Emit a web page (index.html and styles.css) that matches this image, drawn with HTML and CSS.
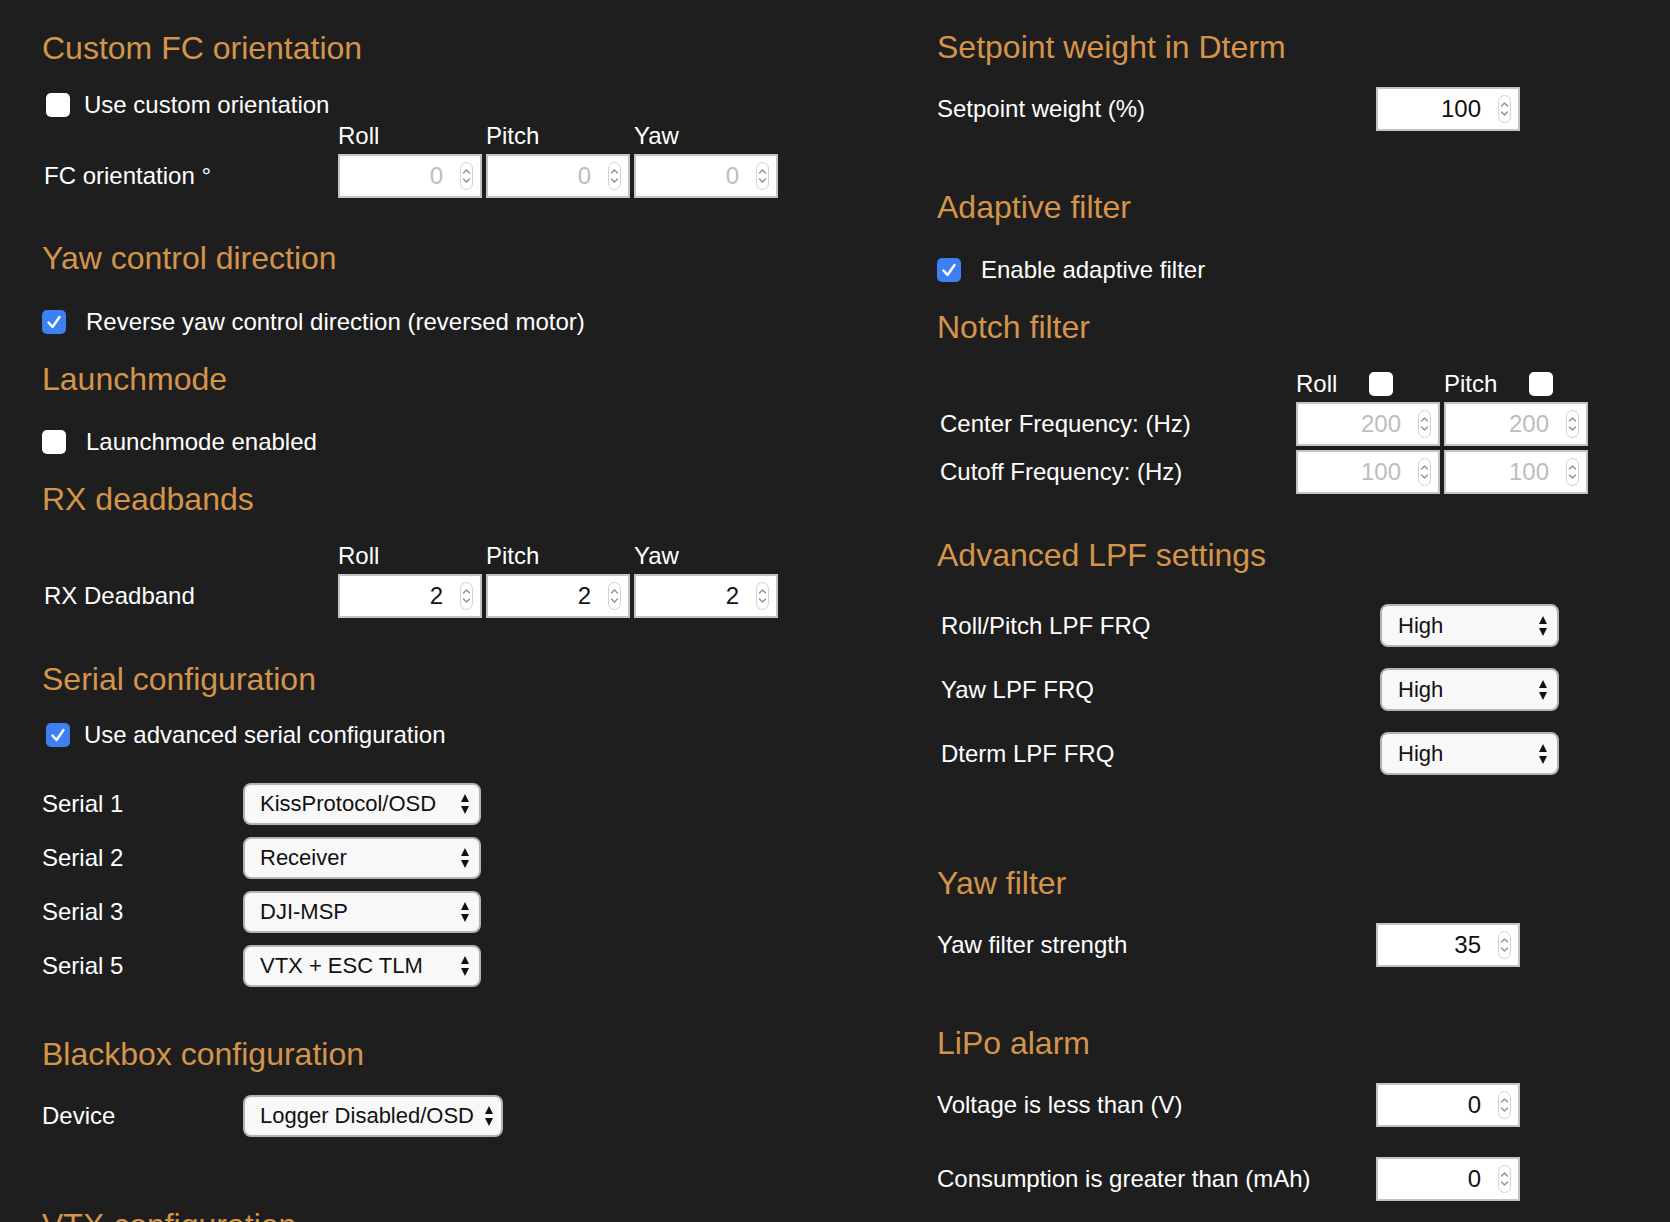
FILE: index.html
```html
<!DOCTYPE html>
<html>
<head>
<meta charset="utf-8">
<link rel="stylesheet" href="styles.css">
</head>
<body>
<div class="page">
  <div class="col col-left">
    <h2 class="title t-first">Custom FC orientation</h2>
    <div class="cbrow in4 gap14 mt25"><span class="cb"></span><span>Use custom orientation</span></div>
    <div class="axes mt3"><span></span><span>Roll</span><span>Pitch</span><span>Yaw</span></div>
    <div class="axes-row mt4">
      <span class="lbl">FC orientation °</span>
      <div class="num dis"><span>0</span><svg class="spin" viewBox="0 0 13 28"><rect x="0.5" y="0.5" width="12" height="27" rx="6"/><polyline points="3.5,11 6.5,8 9.5,11"/><polyline points="3.5,17 6.5,20 9.5,17"/></svg></div>
      <div class="num dis"><span>0</span><svg class="spin" viewBox="0 0 13 28"><rect x="0.5" y="0.5" width="12" height="27" rx="6"/><polyline points="3.5,11 6.5,8 9.5,11"/><polyline points="3.5,17 6.5,20 9.5,17"/></svg></div>
      <div class="num dis"><span>0</span><svg class="spin" viewBox="0 0 13 28"><rect x="0.5" y="0.5" width="12" height="27" rx="6"/><polyline points="3.5,11 6.5,8 9.5,11"/><polyline points="3.5,17 6.5,20 9.5,17"/></svg></div>
    </div>

    <h2 class="title mt42">Yaw control direction</h2>
    <div class="cbrow gap20 mt32"><span class="cb on"><svg viewBox="0 0 24 24"><polyline points="6.5,12.5 10.5,17 17.5,7"/></svg></span><span>Reverse yaw control direction (reversed motor)</span></div>

    <h2 class="title mt25">Launchmode</h2>
    <div class="cbrow gap20 mt31"><span class="cb"></span><span>Launchmode enabled</span></div>

    <h2 class="title mt25">RX deadbands</h2>
    <div class="axes mt25"><span></span><span>Roll</span><span>Pitch</span><span>Yaw</span></div>
    <div class="axes-row mt4">
      <span class="lbl">RX Deadband</span>
      <div class="num"><span>2</span><svg class="spin" viewBox="0 0 13 28"><rect x="0.5" y="0.5" width="12" height="27" rx="6"/><polyline points="3.5,11 6.5,8 9.5,11"/><polyline points="3.5,17 6.5,20 9.5,17"/></svg></div>
      <div class="num"><span>2</span><svg class="spin" viewBox="0 0 13 28"><rect x="0.5" y="0.5" width="12" height="27" rx="6"/><polyline points="3.5,11 6.5,8 9.5,11"/><polyline points="3.5,17 6.5,20 9.5,17"/></svg></div>
      <div class="num"><span>2</span><svg class="spin" viewBox="0 0 13 28"><rect x="0.5" y="0.5" width="12" height="27" rx="6"/><polyline points="3.5,11 6.5,8 9.5,11"/><polyline points="3.5,17 6.5,20 9.5,17"/></svg></div>
    </div>

    <h2 class="title mt43">Serial configuration</h2>
    <div class="cbrow in4 gap14 mt24"><span class="cb on"><svg viewBox="0 0 24 24"><polyline points="6.5,12.5 10.5,17 17.5,7"/></svg></span><span>Use advanced serial configuration</span></div>

    <div class="serials mt34">
      <div class="srow"><span class="lbl">Serial 1</span><div class="sel w238"><span>KissProtocol/OSD</span><svg class="arr" viewBox="0 0 10 22"><polygon points="1,9 9,9 5,1"/><polygon points="1,13 9,13 5,21"/></svg></div></div>
      <div class="srow"><span class="lbl">Serial 2</span><div class="sel w238"><span>Receiver</span><svg class="arr" viewBox="0 0 10 22"><polygon points="1,9 9,9 5,1"/><polygon points="1,13 9,13 5,21"/></svg></div></div>
      <div class="srow"><span class="lbl">Serial 3</span><div class="sel w238"><span>DJI-MSP</span><svg class="arr" viewBox="0 0 10 22"><polygon points="1,9 9,9 5,1"/><polygon points="1,13 9,13 5,21"/></svg></div></div>
      <div class="srow"><span class="lbl">Serial 5</span><div class="sel w238"><span>VTX + ESC TLM</span><svg class="arr" viewBox="0 0 10 22"><polygon points="1,9 9,9 5,1"/><polygon points="1,13 9,13 5,21"/></svg></div></div>
    </div>

    <h2 class="title mt49">Blackbox configuration</h2>
    <div class="srow mt23"><span class="lbl">Device</span><div class="sel w260 tight"><span>Logger Disabled/OSD</span><svg class="arr" viewBox="0 0 10 22"><polygon points="1,9 9,9 5,1"/><polygon points="1,13 9,13 5,21"/></svg></div></div>

    <h2 class="title mt70">VTX configuration</h2>
  </div>

  <div class="col col-right">
    <h2 class="title t-first-r">Setpoint weight in Dterm</h2>
    <div class="frow mt22"><span class="lbl">Setpoint weight (%)</span>
      <div class="num"><span>100</span><svg class="spin" viewBox="0 0 13 28"><rect x="0.5" y="0.5" width="12" height="27" rx="6"/><polyline points="3.5,11 6.5,8 9.5,11"/><polyline points="3.5,17 6.5,20 9.5,17"/></svg></div>
    </div>

    <h2 class="title mt58">Adaptive filter</h2>
    <div class="cbrow gap20 mt31"><span class="cb on"><svg viewBox="0 0 24 24"><polyline points="6.5,12.5 10.5,17 17.5,7"/></svg></span><span>Enable adaptive filter</span></div>

    <h2 class="title mt25">Notch filter</h2>
    <div class="notch-head mt25"><span></span>
      <div class="nh"><span>Roll</span><span class="cb"></span></div>
      <div class="nh"><span>Pitch</span><span class="cb"></span></div>
    </div>
    <div class="notch-row mt4"><span class="lbl">Center Frequency: (Hz)</span>
      <div class="num dis"><span>200</span><svg class="spin" viewBox="0 0 13 28"><rect x="0.5" y="0.5" width="12" height="27" rx="6"/><polyline points="3.5,11 6.5,8 9.5,11"/><polyline points="3.5,17 6.5,20 9.5,17"/></svg></div>
      <div class="num dis"><span>200</span><svg class="spin" viewBox="0 0 13 28"><rect x="0.5" y="0.5" width="12" height="27" rx="6"/><polyline points="3.5,11 6.5,8 9.5,11"/><polyline points="3.5,17 6.5,20 9.5,17"/></svg></div>
    </div>
    <div class="notch-row mt4"><span class="lbl">Cutoff Frequency: (Hz)</span>
      <div class="num dis"><span>100</span><svg class="spin" viewBox="0 0 13 28"><rect x="0.5" y="0.5" width="12" height="27" rx="6"/><polyline points="3.5,11 6.5,8 9.5,11"/><polyline points="3.5,17 6.5,20 9.5,17"/></svg></div>
      <div class="num dis"><span>100</span><svg class="spin" viewBox="0 0 13 28"><rect x="0.5" y="0.5" width="12" height="27" rx="6"/><polyline points="3.5,11 6.5,8 9.5,11"/><polyline points="3.5,17 6.5,20 9.5,17"/></svg></div>
    </div>

    <h2 class="title mt43">Advanced LPF settings</h2>
    <div class="lpf mt31">
      <div class="lrow"><span class="lbl">Roll/Pitch LPF FRQ</span><div class="sel w179"><span>High</span><svg class="arr" viewBox="0 0 10 22"><polygon points="1,9 9,9 5,1"/><polygon points="1,13 9,13 5,21"/></svg></div></div>
      <div class="lrow"><span class="lbl">Yaw LPF FRQ</span><div class="sel w179"><span>High</span><svg class="arr" viewBox="0 0 10 22"><polygon points="1,9 9,9 5,1"/><polygon points="1,13 9,13 5,21"/></svg></div></div>
      <div class="lrow"><span class="lbl">Dterm LPF FRQ</span><div class="sel w179"><span>High</span><svg class="arr" viewBox="0 0 10 22"><polygon points="1,9 9,9 5,1"/><polygon points="1,13 9,13 5,21"/></svg></div></div>
    </div>

    <h2 class="title mt90">Yaw filter</h2>
    <div class="frow mt22"><span class="lbl">Yaw filter strength</span>
      <div class="num"><span>35</span><svg class="spin" viewBox="0 0 13 28"><rect x="0.5" y="0.5" width="12" height="27" rx="6"/><polyline points="3.5,11 6.5,8 9.5,11"/><polyline points="3.5,17 6.5,20 9.5,17"/></svg></div>
    </div>

    <h2 class="title mt58">LiPo alarm</h2>
    <div class="frow mt22"><span class="lbl">Voltage is less than (V)</span>
      <div class="num"><span>0</span><svg class="spin" viewBox="0 0 13 28"><rect x="0.5" y="0.5" width="12" height="27" rx="6"/><polyline points="3.5,11 6.5,8 9.5,11"/><polyline points="3.5,17 6.5,20 9.5,17"/></svg></div>
    </div>
    <div class="frow mt30"><span class="lbl">Consumption is greater than (mAh)</span>
      <div class="num"><span>0</span><svg class="spin" viewBox="0 0 13 28"><rect x="0.5" y="0.5" width="12" height="27" rx="6"/><polyline points="3.5,11 6.5,8 9.5,11"/><polyline points="3.5,17 6.5,20 9.5,17"/></svg></div>
    </div>
  </div>
</div>
</body>
</html>
```

FILE: styles.css
```css
* { box-sizing: border-box; }
html, body { margin: 0; padding: 0; }
body {
  background: #1e1e1e;
  color: #ffffff;
  font-family: "Liberation Sans", Arial, Helvetica, sans-serif;
  font-size: 24px;
  line-height: 28px;
  width: 1670px;
  height: 1222px;
  overflow: hidden;
}
.page { display: flex; align-items: flex-start; }
.col { display: flex; flex-direction: column; align-items: flex-start; }
.col-left { width: 937px; padding-left: 42px; }
.col-right { flex: 1; }

.title {
  margin: 0;
  font-size: 32px;
  line-height: 36px;
  font-weight: normal;
  color: #d4944a;
  white-space: nowrap;
}
.t-first { margin-top: 30px; }
.t-first-r { margin-top: 29px; }

.mt3 { margin-top: 3px; }
.mt4 { margin-top: 4px; }
.mt22 { margin-top: 22px; }
.mt23 { margin-top: 23px; }
.mt24 { margin-top: 24px; }
.mt25 { margin-top: 25px; }
.mt30 { margin-top: 30px; }
.mt31 { margin-top: 31px; }
.mt32 { margin-top: 32px; }
.mt34 { margin-top: 34px; }
.mt42 { margin-top: 42px; }
.mt43 { margin-top: 43px; }
.mt49 { margin-top: 49px; }
.mt58 { margin-top: 58px; }
.mt70 { margin-top: 70px; }
.mt90 { margin-top: 90px; }

/* checkbox rows */
.cbrow { display: flex; align-items: center; height: 28px; white-space: nowrap; }
.in4 { margin-left: 4px; }
.gap14 { gap: 14px; }
.gap20 { gap: 20px; }

.cb {
  width: 24px;
  height: 24px;
  border-radius: 5px;
  background: #ffffff;
  flex: none;
  display: inline-flex;
}
.cb.on { background: #3d80f3; }
.cb svg { width: 24px; height: 24px; }
.cb svg polyline { fill: none; stroke: #ffffff; stroke-width: 2.4; stroke-linecap: round; stroke-linejoin: round; }

/* axis tables */
.axes, .axes-row {
  display: grid;
  grid-template-columns: 290px 144px 144px 144px;
  column-gap: 4px;
  margin-left: 2px;
}
.axes { height: 28px; }
.axes-row { align-items: center; }
.lbl { white-space: nowrap; }

/* number inputs */
.num {
  width: 144px;
  height: 44px;
  background: #ffffff;
  border: 2px solid #c3c3c3;
  display: flex;
  align-items: center;
  justify-content: flex-end;
  gap: 17px;
  padding-right: 7px;
  color: #111111;
}
.num.dis { color: #bdbdbd; }
.spin { width: 13px; height: 28px; flex: none; }
.spin rect { fill: #ffffff; stroke: #d2d2d2; stroke-width: 1; }
.spin polyline { fill: none; stroke: #8a8a8a; stroke-width: 1.2; stroke-linecap: round; stroke-linejoin: round; }

/* selects */
.serials { display: flex; flex-direction: column; gap: 12px; }
.srow {
  display: grid;
  grid-template-columns: 201px auto;
  align-items: center;
}
.sel {
  height: 42px;
  background: #f8f8f8;
  border: 2px solid #b3b3b3;
  border-radius: 8px;
  color: #111111;
  font-size: 22px;
  display: flex;
  align-items: center;
  justify-content: space-between;
  padding: 0 9px 0 15px;
  white-space: nowrap;
}
.sel.tight { padding-right: 7px; }
.w238 { width: 238px; }
.w260 { width: 260px; }
.w179 { width: 179px; height: 43px; padding-left: 16px; }
.arr { width: 10px; height: 22px; flex: none; }
.arr polygon { fill: #111111; }

/* right column rows */
.frow {
  display: grid;
  grid-template-columns: 439px 144px;
  align-items: center;
}

.notch-head, .notch-row {
  display: grid;
  grid-template-columns: 352px 144px 144px;
  column-gap: 4px;
  margin-left: 3px;
  align-items: center;
}
.notch-head { height: 28px; }
.nh { display: flex; align-items: center; gap: 32px; }

.lpf { display: flex; flex-direction: column; gap: 21px; margin-left: 4px; }
.lrow {
  display: grid;
  grid-template-columns: 439px 179px;
  align-items: center;
}
```
